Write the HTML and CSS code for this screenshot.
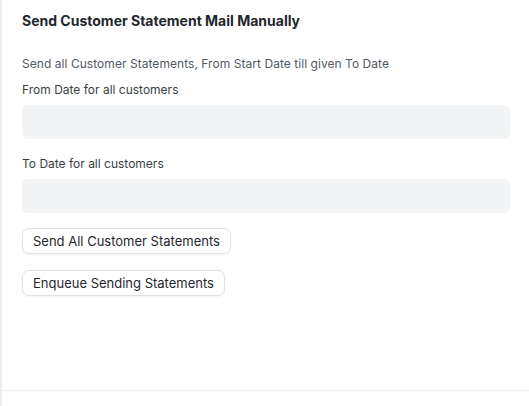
FILE: index.html
```html
<!DOCTYPE html>
<html>
<head>
<meta charset="utf-8">
<link rel="stylesheet" href="styles.css">
</head>
<body>
<div class="page">
  <div class="section">
    <h2 class="section-head">Send Customer Statement Mail Manually</h2>
    <p class="desc">Send all Customer Statements, From Start Date till given To Date</p>
    <div class="field">
      <label class="label">From Date for all customers</label>
      <div class="input"></div>
    </div>
    <div class="field">
      <label class="label">To Date for all customers</label>
      <div class="input"></div>
    </div>
    <div class="actions">
      <button class="btn">Send All Customer Statements</button>
      <button class="btn">Enqueue Sending Statements</button>
    </div>
  </div>
  <div class="footer"></div>
</div>
</body>
</html>
```
FILE: styles.css
```css
* { box-sizing: border-box; }
html, body { margin: 0; padding: 0; background: #fff; }
body { font-family: Inter, "Noto Sans", sans-serif; color: #1f272e; }
.page {
  border-left: 2px solid #ececec;
  min-height: 406px;
  display: flex;
  flex-direction: column;
}
.section {
  padding: 12px 19px 0 20px;
  height: 391px;
  border-bottom: 1px solid #f0f0f0;
}
.section-head {
  margin: 0;
  font-size: 14px;
  font-weight: 700;
  line-height: 18px;
  color: #1f272e;
}
.desc {
  margin: 25px 0 0;
  font-size: 12px;
  line-height: 18px;
  letter-spacing: 0.05px;
  color: #525a63;
}
.field { margin-top: 8px; }
.field + .field { margin-top: 16px; }
.label {
  display: block;
  font-size: 12px;
  line-height: 18px;
  color: #383f46;
  margin-bottom: 6px;
}
.input {
  height: 34px;
  background: #f3f4f6;
  border-radius: 6px;
}
.actions {
  margin-top: 15px;
  display: flex;
  flex-direction: column;
  align-items: flex-start;
  gap: 16px;
}
.btn {
  font-family: inherit;
  font-size: 13px;
  line-height: 18px;
  color: #1f272e;
  background: #fff;
  border: 1px solid #e2e2e2;
  border-radius: 7px;
  padding: 3px 10px;
  height: 26px;
  box-shadow: 0 1px 2px rgba(0,0,0,0.05);
}
```
